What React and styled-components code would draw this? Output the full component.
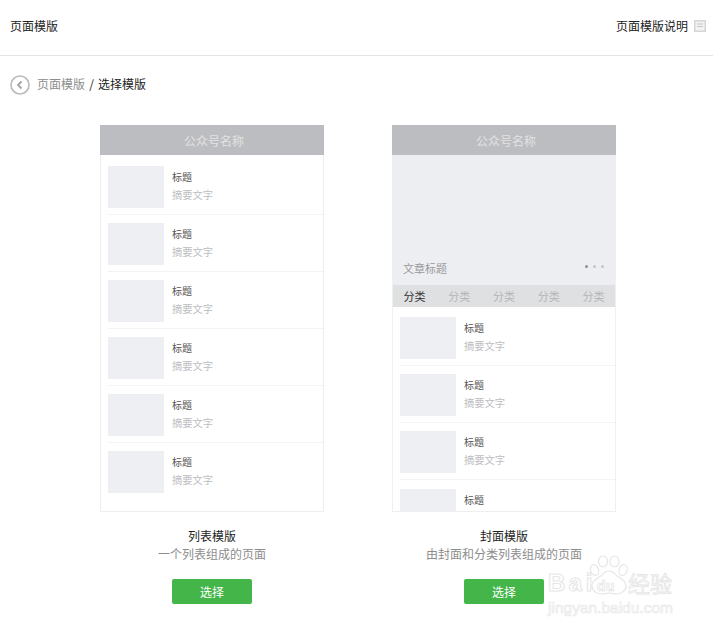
import React from 'react';
import styled, { createGlobalStyle } from 'styled-components';

const GlobalStyle = createGlobalStyle`
  html, body {
    margin: 0;
    padding: 0;
    background: #fff;
    font-family: "Noto Sans CJK SC", "Liberation Sans", sans-serif;
    font-size: 12px;
    color: #222;
  }
`;

const Page = styled.div`
  position: relative;
  width: 713px;
  height: 632px;
  overflow: hidden;
`;

const TopBar = styled.div`
  height: 55px;
  border-bottom: 1px solid #e4e4e4;
  padding: 0 7px 0 10px;
  display: flex;
  align-items: center;
  justify-content: space-between;
`;

const TopTitle = styled.div`
  line-height: 16px;
  margin-top: -3px;
`;

const HelpLink = styled.div`
  display: flex;
  align-items: center;
  gap: 6px;
  line-height: 16px;
  margin-top: -3px;
`;

const Crumbs = styled.div`
  display: flex;
  align-items: center;
  height: 20px;
  margin: 19px 0 0 10px;
  gap: 7px;
  line-height: 16px;
`;

const CrumbText = styled.div`
  margin-top: -2px;
`;

const CrumbParent = styled.span`
  color: #8d8d8d;
`;

const CrumbSep = styled.span`
  margin: 0 1.5px;
`;

const Templates = styled.div`
  display: flex;
  gap: 68px;
  padding-left: 100px;
  margin-top: 30px;
`;

const Column = styled.div`
  width: 224px;
  display: flex;
  flex-direction: column;
  align-items: center;
`;

const Phone = styled.div`
  width: 224px;
  height: 387px;
  display: flex;
  flex-direction: column;
`;

const PhoneHead = styled.div`
  height: 30px;
  flex: none;
  padding-left: 4px;
  background: #bcbdc0;
  color: #e2e2e4;
  text-align: center;
  line-height: 31px;
`;

const PhoneBody = styled.div`
  flex: 1;
  min-height: 0;
  border: 1px solid #efeff0;
  border-top: 0;
  overflow: hidden;
`;

const Cover = styled.div`
  height: 130px;
  box-sizing: border-box;
  background: #edeef2;
  padding: 0 11px 9px 10px;
  display: flex;
  align-items: flex-end;
  justify-content: space-between;
`;

const CoverTitle = styled.div`
  font-size: 11px;
  line-height: 16px;
  color: #9a9a9c;
`;

const Dots = styled.div`
  display: flex;
  gap: 5px;
  margin: 0 0 8px;
`;

const Dot = styled.i`
  display: block;
  width: 3px;
  height: 3px;
  border-radius: 50%;
  background: ${p => (p.$on ? '#8f8f92' : '#c4c4c8')};
`;

const Tabs = styled.div`
  display: flex;
  height: 22px;
  background: #dfe0e2;
`;

const Tab = styled.div`
  flex: none;
  width: 44.8px;
  text-align: center;
  font-size: 11px;
  line-height: 22px;
  color: ${p => (p.$on ? '#333' : '#b5b5b8')};

  &:first-child {
    margin-left: -1px;
  }
`;

const List = styled.div`
  padding-top: ${p => p.$top}px;
`;

const Row = styled.div`
  display: flex;
  margin: 0 0 ${p => p.$gap}px 7px;
  padding-bottom: 6px;
  border-bottom: 1px solid #f3f3f4;

  &:last-child {
    border-bottom: 0;
  }
`;

const Thumb = styled.div`
  width: 56px;
  height: 42px;
  background: #eeeff3;
  flex: none;
`;

const RowText = styled.div`
  margin-left: 8px;
  padding-top: 4px;
`;

const RowTitle = styled.div`
  font-size: 10px;
  line-height: 14px;
  color: #555;
`;

const RowDesc = styled.div`
  font-size: 10.25px;
  line-height: 14px;
  margin-top: 4px;
  color: #bdbdbf;
`;

const Name = styled.div`
  margin-top: 15px;
  line-height: 18px;
`;

const Desc = styled.div`
  line-height: 18px;
  color: #8d8d8d;
`;

const PickButton = styled.button`
  width: 80px;
  height: 25px;
  margin-top: 16px;
  padding: 0;
  border: 0;
  border-radius: 2px;
  background: #44b549;
  color: #fff;
  font: inherit;
  line-height: 25px;
`;

const Watermark = styled.div`
  position: absolute;
  left: 547px;
  top: 555px;
  width: 127px;
  height: 60px;
  pointer-events: none;
`;

const Paw = styled.svg`
  position: absolute;
  left: 42px;
  top: 0;
`;

const MarkBai = styled.span`
  position: absolute;
  left: 1px;
  top: 14px;
  font-family: "Liberation Sans", sans-serif;
  font-weight: 700;
  font-size: 24px;
  line-height: 28px;
  letter-spacing: 3.5px;
  color: #fff;
  -webkit-text-stroke: 1px #e6e6e6;
`;

const MarkDu = styled.span`
  position: absolute;
  left: 50px;
  top: 24px;
  font-family: "Liberation Sans", sans-serif;
  font-weight: 700;
  font-size: 14px;
  line-height: 14px;
  letter-spacing: 0.5px;
  color: #fff;
  -webkit-text-stroke: 0.7px #e2e2e2;
`;

const MarkCn = styled.span`
  position: absolute;
  left: 81px;
  top: 12px;
  font-size: 22px;
  line-height: 30px;
  color: #fff;
  -webkit-text-stroke: 0.8px #e4e4e4;
`;

const MarkSite = styled.span`
  position: absolute;
  left: 1px;
  top: 44px;
  font-family: "Liberation Sans", sans-serif;
  font-size: 15.5px;
  line-height: 18px;
  color: #fff;
  white-space: nowrap;
  -webkit-text-stroke: 0.7px #e8e8e8;
`;

function BackIcon() {
  return (
    <svg width="20" height="20" viewBox="0 0 20 20" fill="none">
      <circle cx="10" cy="10" r="9" stroke="#b9b9b9" strokeWidth="1.6" />
      <path d="M11.5 6.5 8 10l3.5 3.5" stroke="#a2a2a2" strokeWidth="1.8" />
    </svg>
  );
}

function DocIcon() {
  return (
    <svg width="12" height="12" viewBox="0 0 12 12">
      <rect x="0.75" y="0.75" width="10.5" height="10.5" fill="#f3f3f3" stroke="#d6d6d6" strokeWidth="1.5" />
      <path d="M3 4h6M3 6.5h6" stroke="#c4c4c4" />
    </svg>
  );
}

function PawMark() {
  return (
    <Paw width="40" height="40" viewBox="0 0 40 40" fill="#fff" stroke="#e6e6e6" strokeWidth="1.2">
      <ellipse cx="5.5" cy="15" rx="4" ry="5.5" transform="rotate(-18 5.5 15)" />
      <ellipse cx="14" cy="6.5" rx="4.5" ry="5.5" />
      <ellipse cx="25.5" cy="6.5" rx="4.5" ry="5.5" />
      <ellipse cx="34" cy="15" rx="4" ry="5.5" transform="rotate(18 34 15)" />
      <path d="M3 31c0-7 8-8 11-12 3-4 9-4 12 0 3 4 11 5 11 12 0 5-5 8-10 8-3 0-5-1-7-1s-4 1-7 1c-5 0-10-3-10-8Z" />
    </Paw>
  );
}

const rowOf = n => Array.from({ length: n }, (_, i) => i);

function Rows({ count, top, gap }) {
  return (
    <List $top={top}>
      {rowOf(count).map(i => (
        <Row key={i} $gap={gap}>
          <Thumb />
          <RowText>
            <RowTitle>标题</RowTitle>
            <RowDesc>摘要文字</RowDesc>
          </RowText>
        </Row>
      ))}
    </List>
  );
}

export default function App() {
  return (
    <Page>
      <GlobalStyle />
      <TopBar>
        <TopTitle>页面模版</TopTitle>
        <HelpLink>
          页面模版说明
          <DocIcon />
        </HelpLink>
      </TopBar>
      <Crumbs>
        <BackIcon />
        <CrumbText>
          <CrumbParent>页面模版</CrumbParent>
          <CrumbSep> / </CrumbSep>
          选择模版
        </CrumbText>
      </Crumbs>
      <Templates>
        <Column>
          <Phone>
            <PhoneHead>公众号名称</PhoneHead>
            <PhoneBody>
              <Rows count={6} top={11} gap={8} />
            </PhoneBody>
          </Phone>
          <Name>列表模版</Name>
          <Desc>一个列表组成的页面</Desc>
          <PickButton>选择</PickButton>
        </Column>
        <Column>
          <Phone>
            <PhoneHead>公众号名称</PhoneHead>
            <PhoneBody>
              <Cover>
                <CoverTitle>文章标题</CoverTitle>
                <Dots>
                  <Dot $on />
                  <Dot />
                  <Dot />
                </Dots>
              </Cover>
              <Tabs>
                <Tab $on>分类</Tab>
                <Tab>分类</Tab>
                <Tab>分类</Tab>
                <Tab>分类</Tab>
                <Tab>分类</Tab>
              </Tabs>
              <Rows count={4} top={10} gap={8.2} />
            </PhoneBody>
          </Phone>
          <Name>封面模版</Name>
          <Desc>由封面和分类列表组成的页面</Desc>
          <PickButton>选择</PickButton>
        </Column>
      </Templates>
      <Watermark>
        <PawMark />
        <MarkBai>Bai</MarkBai>
        <MarkDu>du</MarkDu>
        <MarkCn>经验</MarkCn>
        <MarkSite>jingyan.baidu.com</MarkSite>
      </Watermark>
    </Page>
  );
}
